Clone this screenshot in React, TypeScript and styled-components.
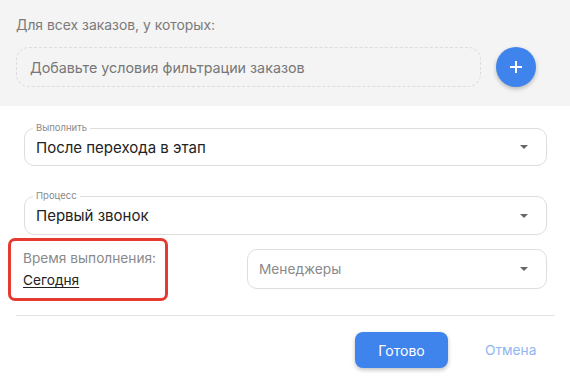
import React from "react";
import styled, { createGlobalStyle } from "styled-components";

const Global = createGlobalStyle`
  html, body { margin: 0; padding: 0; background: #fff; }
  body { font-family: Inter, "Noto Sans", sans-serif; -webkit-font-smoothing: antialiased; }
  * { box-sizing: border-box; }
`;

const Page = styled.div`
  width: 570px;
  height: 377px;
  background: #fff;
  display: flex;
  flex-direction: column;
`;

const FilterArea = styled.div`
  background: #f4f4f4;
  height: 106px;
  padding: 16px 34px 0 16px;
  display: flex;
  flex-direction: column;
`;

const FilterTitle = styled.div`
  font-size: 13.9px;
  line-height: 18px;
  color: #7a7a7a;
`;

const FilterRow = styled.div`
  display: flex;
  align-items: center;
  gap: 15px;
  margin-top: 13px;
`;

const DashedBox = styled.div`
  flex: 1;
  height: 40px;
  border: 1px dashed #dcdcdc;
  border-radius: 13px;
  display: flex;
  align-items: center;
  padding-left: 13px;
  font-size: 14.3px;
  color: #777;
`;

const RoundButton = styled.button`
  width: 40px;
  height: 40px;
  border-radius: 50%;
  border: none;
  background: #3f84ec;
  box-shadow: 0 2px 4px rgba(0, 0, 0, 0.25);
  display: flex;
  align-items: center;
  justify-content: center;
  padding: 0;
`;

const Form = styled.div`
  padding: 22px 0 0 0;
  display: flex;
  flex-direction: column;
`;

const FieldWrap = styled.div<{ $mt?: number }>`
  margin: ${(p) => p.$mt ?? 0}px 23px 0 24px;
`;

const Outlined = styled.div<{ $h?: number }>`
  position: relative;
  height: ${(p) => p.$h ?? 38}px;
  border: 1px solid #dedede;
  border-radius: 10px;
  display: flex;
  align-items: center;
  padding: 0 18px 0 11px;
`;

const Legend = styled.span`
  position: absolute;
  top: -7px;
  left: 8px;
  padding: 0 3px;
  background: #fff;
  font-size: 9.5px;
  line-height: 12px;
  color: #8a8a8a;
`;

const Value = styled.span<{ $muted?: boolean }>`
  flex: 1;
  font-size: ${(p) => (p.$muted ? "13.7px" : "15px")};
  color: ${(p) => (p.$muted ? "#8a8a8a" : "#222")};
`;

const Caret = styled.span`
  width: 0;
  height: 0;
  border-left: 4px solid transparent;
  border-right: 4px solid transparent;
  border-top: 4px solid #666;
`;

const TimeRow = styled.div`
  display: flex;
  align-items: flex-start;
  margin: 3px 23px 0 8px;
`;

const TimeBox = styled.div`
  width: 160px;
  height: 63px;
  border: 3.5px solid #e53a30;
  border-radius: 7px;
  padding: 9px 0 0 12px;
  display: flex;
  flex-direction: column;
  gap: 5px;
`;

const TimeLabel = styled.div`
  font-size: 13.7px;
  line-height: 17px;
  color: #8a8a8a;
`;

const TimeValue = styled.a`
  font-size: 13.7px;
  line-height: 17px;
  color: #222;
  text-decoration: underline;
  text-underline-offset: 2px;
`;

const ManagersWrap = styled.div`
  flex: 1;
  margin: 11px 0 0 79px;
`;

const Divider = styled.div`
  height: 1px;
  background: #e2e2e2;
  margin: 14px 15px 0 16px;
`;

const Actions = styled.div`
  display: flex;
  align-items: center;
  margin: 16px 0 0 355px;
  gap: 37px;
`;

const PrimaryButton = styled.button`
  width: 93px;
  height: 36px;
  border: none;
  border-radius: 8px;
  background: #3f84ec;
  color: #fff;
  font-family: inherit;
  font-size: 14px;
  box-shadow: 0 2px 4px rgba(0, 0, 0, 0.25);
`;

const LinkButton = styled.span`
  font-size: 13.7px;
  color: #8fb6f4;
`;

const Select = ({ label, value, muted, h }: { label?: string; value: string; muted?: boolean; h?: number }) => (
  <Outlined $h={h}>
    {label && <Legend>{label}</Legend>}
    <Value $muted={muted}>{value}</Value>
    <Caret />
  </Outlined>
);

export default function App() {
  return (
    <Page>
      <Global />
      <FilterArea>
        <FilterTitle>Для всех заказов, у которых:</FilterTitle>
        <FilterRow>
          <DashedBox>Добавьте условия фильтрации заказов</DashedBox>
          <RoundButton>
            <svg width="14" height="14" viewBox="0 0 14 14">
              <path d="M7 1v12M1 7h12" stroke="#fff" strokeWidth="2" />
            </svg>
          </RoundButton>
        </FilterRow>
      </FilterArea>
      <Form>
        <FieldWrap>
          <Select label="Выполнить" value="После перехода в этап" />
        </FieldWrap>
        <FieldWrap $mt={30}>
          <Select label="Процесс" value="Первый звонок" h={39} />
        </FieldWrap>
        <TimeRow>
          <TimeBox>
            <TimeLabel>Время выполнения:</TimeLabel>
            <TimeValue>Сегодня</TimeValue>
          </TimeBox>
          <ManagersWrap>
            <Select value="Менеджеры" muted h={40} />
          </ManagersWrap>
        </TimeRow>
        <Divider />
        <Actions>
          <PrimaryButton>Готово</PrimaryButton>
          <LinkButton>Отмена</LinkButton>
        </Actions>
      </Form>
    </Page>
  );
}
